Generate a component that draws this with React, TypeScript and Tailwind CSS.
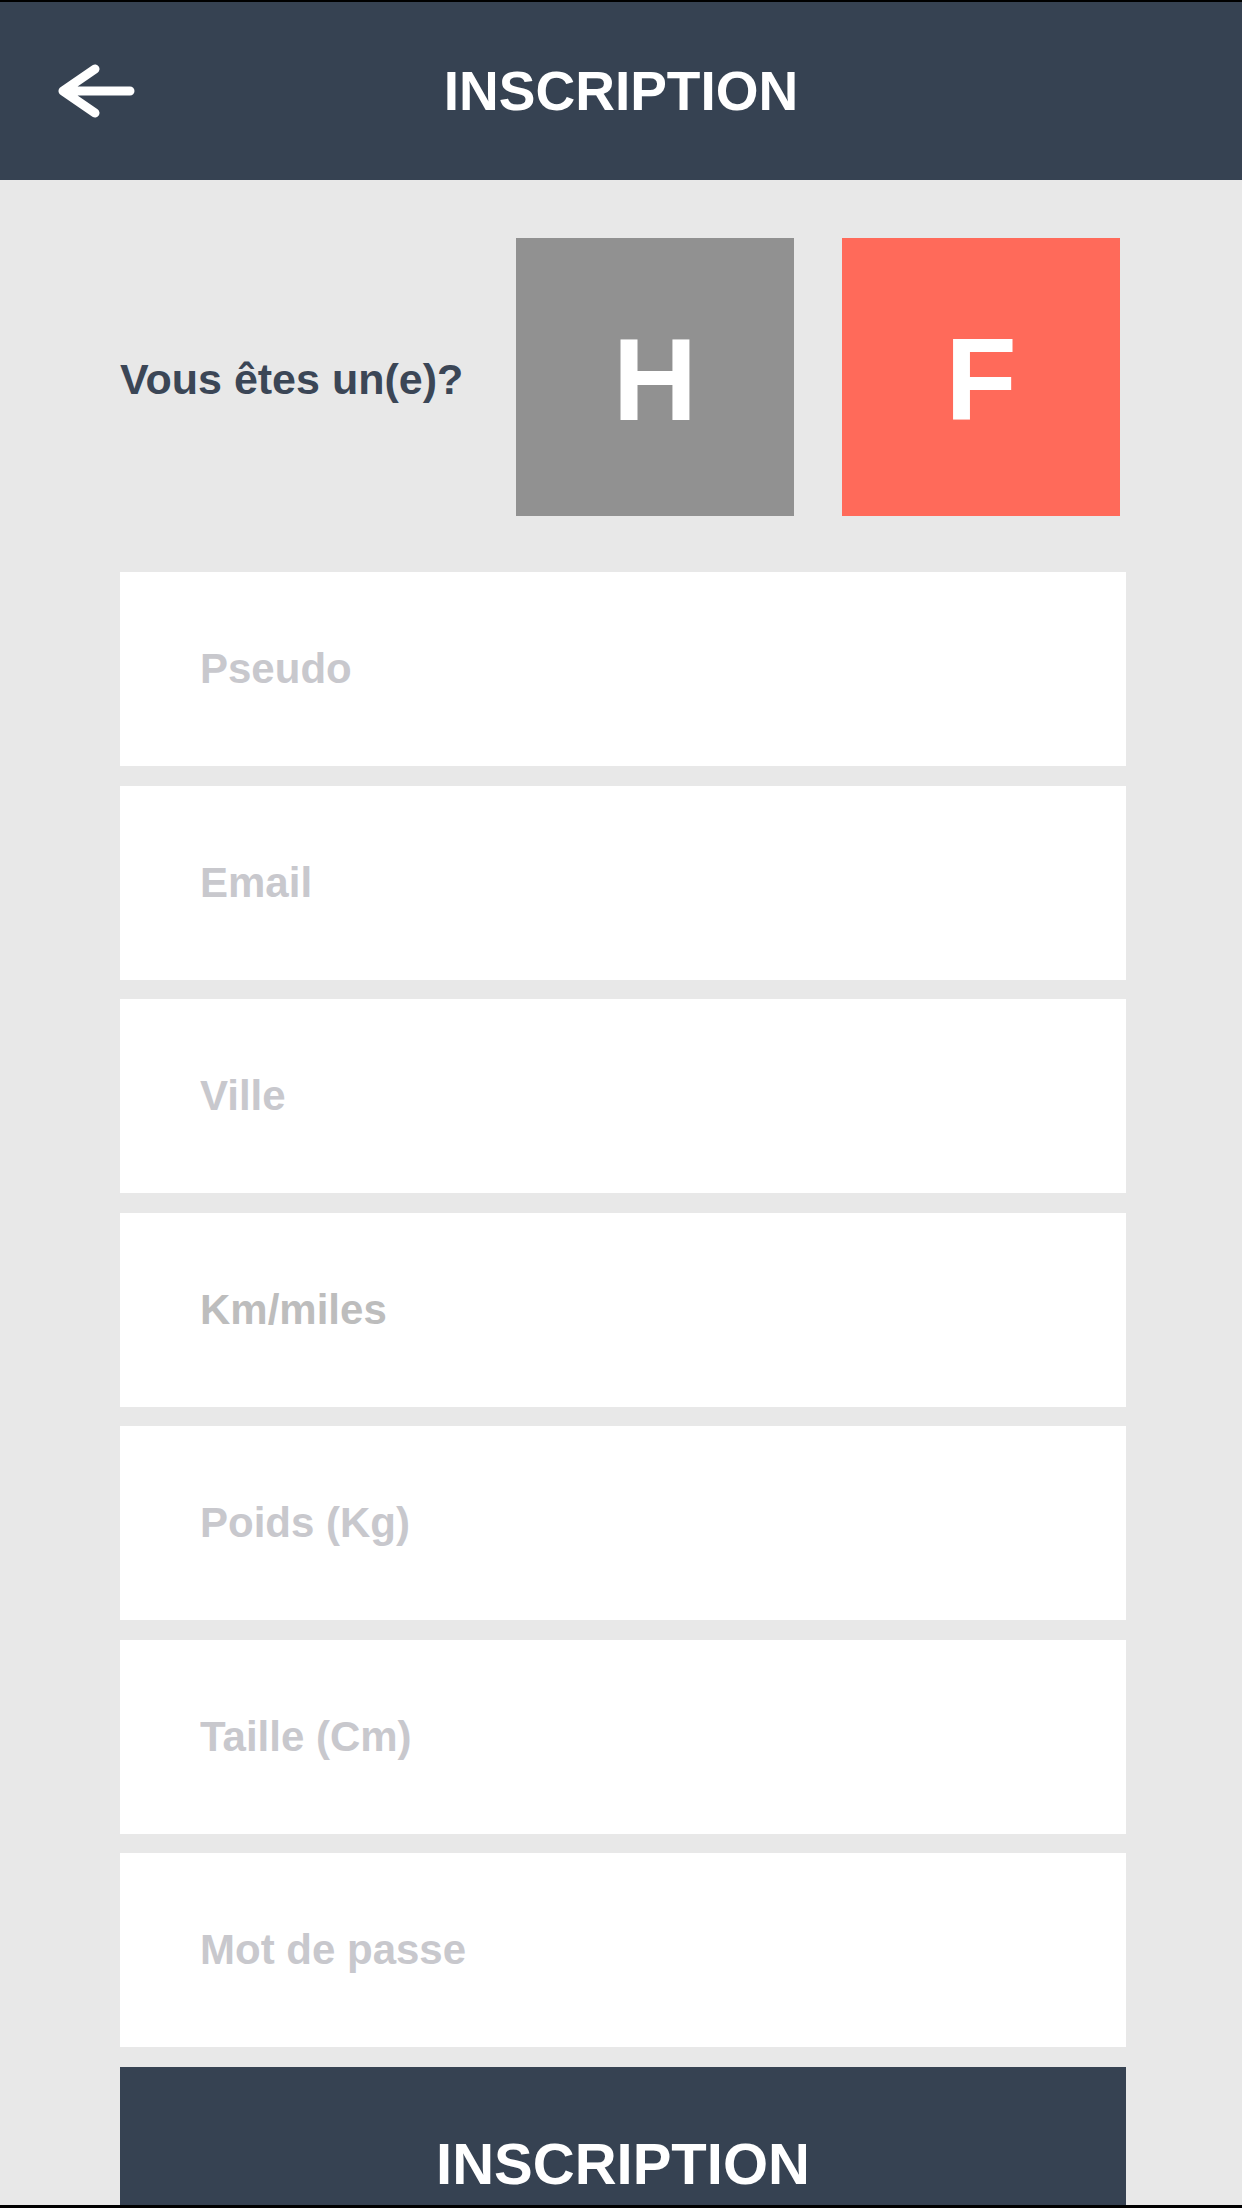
import { useState } from 'react';

const fields = [
  { name: 'pseudo', label: 'Pseudo', type: 'text' },
  { name: 'email', label: 'Email', type: 'email' },
  { name: 'ville', label: 'Ville', type: 'text' },
  { name: 'distance', label: 'Km/miles', type: 'text' },
  { name: 'poids', label: 'Poids (Kg)', type: 'text' },
  { name: 'taille', label: 'Taille (Cm)', type: 'text' },
  { name: 'password', label: 'Mot de passe', type: 'password' },
];

function BackArrow() {
  return (
    <svg width="80" height="60" viewBox="0 0 80 60" fill="none">
      <path
        d="M6 30 H73 M6 30 L38 8 M6 30 L38 52"
        stroke="#ffffff"
        strokeWidth="9"
        strokeLinecap="round"
        strokeLinejoin="round"
      />
    </svg>
  );
}

export default function App() {
  const [gender, setGender] = useState<'H' | 'F'>('F');

  return (
    <div
      className="flex flex-col h-[2208px] overflow-hidden bg-[#e8e8e8]"
      style={{ fontFamily: '"Liberation Sans", Arial, sans-serif' }}
    >
      <div className="h-[2px] bg-black shrink-0" />

      <header className="grid grid-cols-[1fr_auto_1fr] items-center h-[178px] bg-[#364252] shrink-0">
        <button className="justify-self-start pl-[57px] cursor-pointer">
          <BackArrow />
        </button>
        <h1 className="text-[55px] font-bold text-white leading-none">INSCRIPTION</h1>
        <div />
      </header>

      <main className="flex-1 overflow-hidden pt-[58px] pl-[120px] pr-[116px]">
        <div className="flex items-center pr-[6px]">
          <span className="flex-1 pt-[4px] text-[43px] font-bold text-[#3b4656] leading-none">
            Vous êtes un(e)?
          </span>
          <div className="flex gap-[48px]">
            <button
              onClick={() => setGender('H')}
              className={`w-[278px] h-[278px] flex items-center justify-center pt-[4px] text-white text-[117px] font-bold leading-none ${
                gender === 'H' ? 'bg-[#ff6a5a]' : 'bg-[#919191]'
              }`}
            >
              H
            </button>
            <button
              onClick={() => setGender('F')}
              className={`w-[278px] h-[278px] flex items-center justify-center pt-[4px] text-white text-[117px] font-bold leading-none ${
                gender === 'F' ? 'bg-[#ff6a5a]' : 'bg-[#919191]'
              }`}
            >
              F
            </button>
          </div>
        </div>

        <form className="flex flex-col gap-[19.5px] mt-[56px]">
          {fields.map((field) => (
            <input
              key={field.name}
              name={field.name}
              type={field.type}
              placeholder={field.label}
              className={`h-[194px] w-full bg-white px-[80px] text-[42px] font-bold text-[#3b4656] outline-none ${
                field.name === 'distance'
                  ? 'placeholder:text-[#bdbdbd]'
                  : 'placeholder:text-[#c8c8cd]'
              }`}
            />
          ))}

          <button
            type="button"
            className="h-[195px] w-full shrink-0 flex items-center justify-center bg-[#364252] text-white text-[58px] font-bold leading-none"
          >
            INSCRIPTION
          </button>
        </form>
      </main>

      <div className="h-[3px] bg-black shrink-0" />
    </div>
  );
}
